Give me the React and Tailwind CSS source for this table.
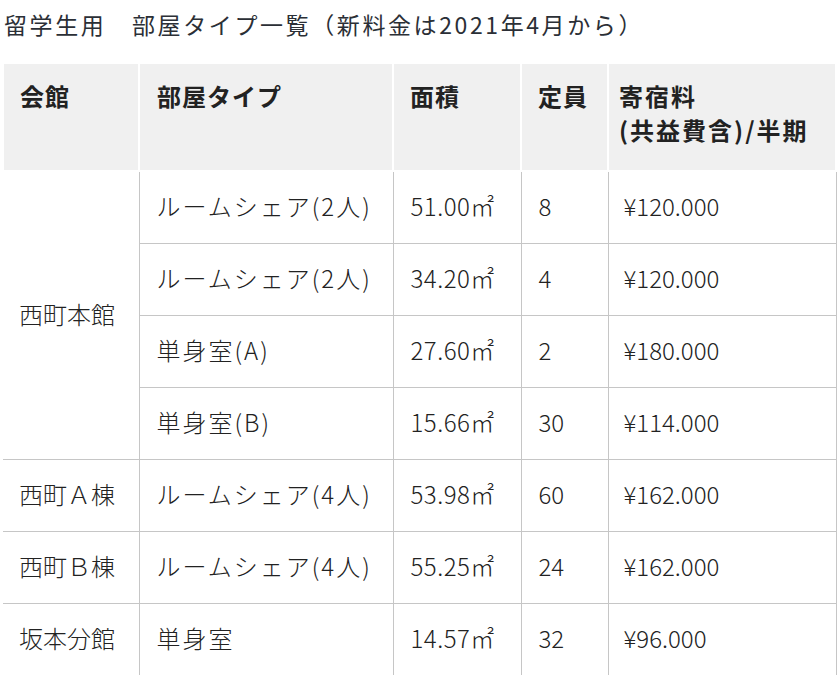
import React from "react";

const rows = [
  { hall: "西町本館", span: 4, type: "ルームシェア(2人)", area: "51.00㎡", cap: "8", fee: "¥120.000" },
  { type: "ルームシェア(2人)", area: "34.20㎡", cap: "4", fee: "¥120.000" },
  { type: "単身室(A)", area: "27.60㎡", cap: "2", fee: "¥180.000" },
  { type: "単身室(B)", area: "15.66㎡", cap: "30", fee: "¥114.000" },
  { hall: "西町Ａ棟", span: 1, type: "ルームシェア(4人)", area: "53.98㎡", cap: "60", fee: "¥162.000" },
  { hall: "西町Ｂ棟", span: 1, type: "ルームシェア(4人)", area: "55.25㎡", cap: "24", fee: "¥162.000" },
  { hall: "坂本分館", span: 1, type: "単身室", area: "14.57㎡", cap: "32", fee: "¥96.000", last: true },
];

export default function App() {
  const font = { fontFamily: '"Noto Sans CJK JP", "Noto Sans", sans-serif' };
  return (
    <div className="w-[838px] h-[682px] bg-white overflow-hidden pl-[2px] text-[#222]" style={font}>
      <div className="h-[48px] flex items-center pl-[2px] text-[23px] text-[#2b2f36] tracking-[2.6px]">
        留学生用　部屋タイプ一覧（新料金は2021年4月から）
      </div>
      <table className="mt-[14px] table-fixed border-collapse w-[833px]">
        <colgroup>
          <col className="w-[136px]" />
          <col className="w-[254px]" />
          <col className="w-[128px]" />
          <col className="w-[87px]" />
          <col className="w-[228px]" />
        </colgroup>
        <thead>
          <tr className="h-[108px]">
            <th className="align-top text-left font-bold text-[24px] leading-[34px] tracking-[1px] bg-[#f0f0f0] border-2 border-white pt-[15px] pl-[16px]">会館</th>
            <th className="align-top text-left font-bold text-[24px] leading-[34px] tracking-[1px] bg-[#f0f0f0] border-2 border-white pt-[15px] pl-[17px]">部屋タイプ</th>
            <th className="align-top text-left font-bold text-[24px] leading-[34px] tracking-[1px] bg-[#f0f0f0] border-2 border-white pt-[15px] pl-[16px]">面積</th>
            <th className="align-top text-left font-bold text-[24px] leading-[34px] tracking-[1px] bg-[#f0f0f0] border-2 border-white pt-[15px] pl-[16px]">定員</th>
            <th className="align-top text-left font-bold text-[24px] leading-[34px] tracking-[2px] bg-[#f0f0f0] border-2 border-white pt-[15px] pl-[10px]">
              寄宿料<br />(共益費含)/半期
            </th>
          </tr>
        </thead>
        <tbody>
          {rows.map((r, i) => (
            <tr key={i} className="h-[72px]">
              {r.hall && (
                <td
                  rowSpan={r.span}
                  className={`text-[24px] font-light pl-[16px] pb-[3px] border-t border-[#c6c6c6] ${r.last ? "" : "border-b"}`}
                >
                  {r.hall}
                </td>
              )}
              <td className={`text-[24px] font-light tracking-[2px] pl-[17px] pb-[3px] border-l border-t border-[#c6c6c6] ${r.last ? "" : "border-b"}`}>{r.type}</td>
              <td className={`text-[24px] font-light tracking-[0.5px] pl-[17px] pb-[3px] border-l border-t border-[#c6c6c6] ${r.last ? "" : "border-b"}`}>{r.area}</td>
              <td className={`text-[24px] font-light pl-[17px] pb-[3px] border-l border-t border-[#c6c6c6] ${r.last ? "" : "border-b"}`}>{r.cap}</td>
              <td className={`text-[24px] font-light pl-[15px] pb-[3px] border-l border-r border-t border-[#c6c6c6] ${r.last ? "" : "border-b"}`}>{r.fee}</td>
            </tr>
          ))}
        </tbody>
      </table>
    </div>
  );
}
